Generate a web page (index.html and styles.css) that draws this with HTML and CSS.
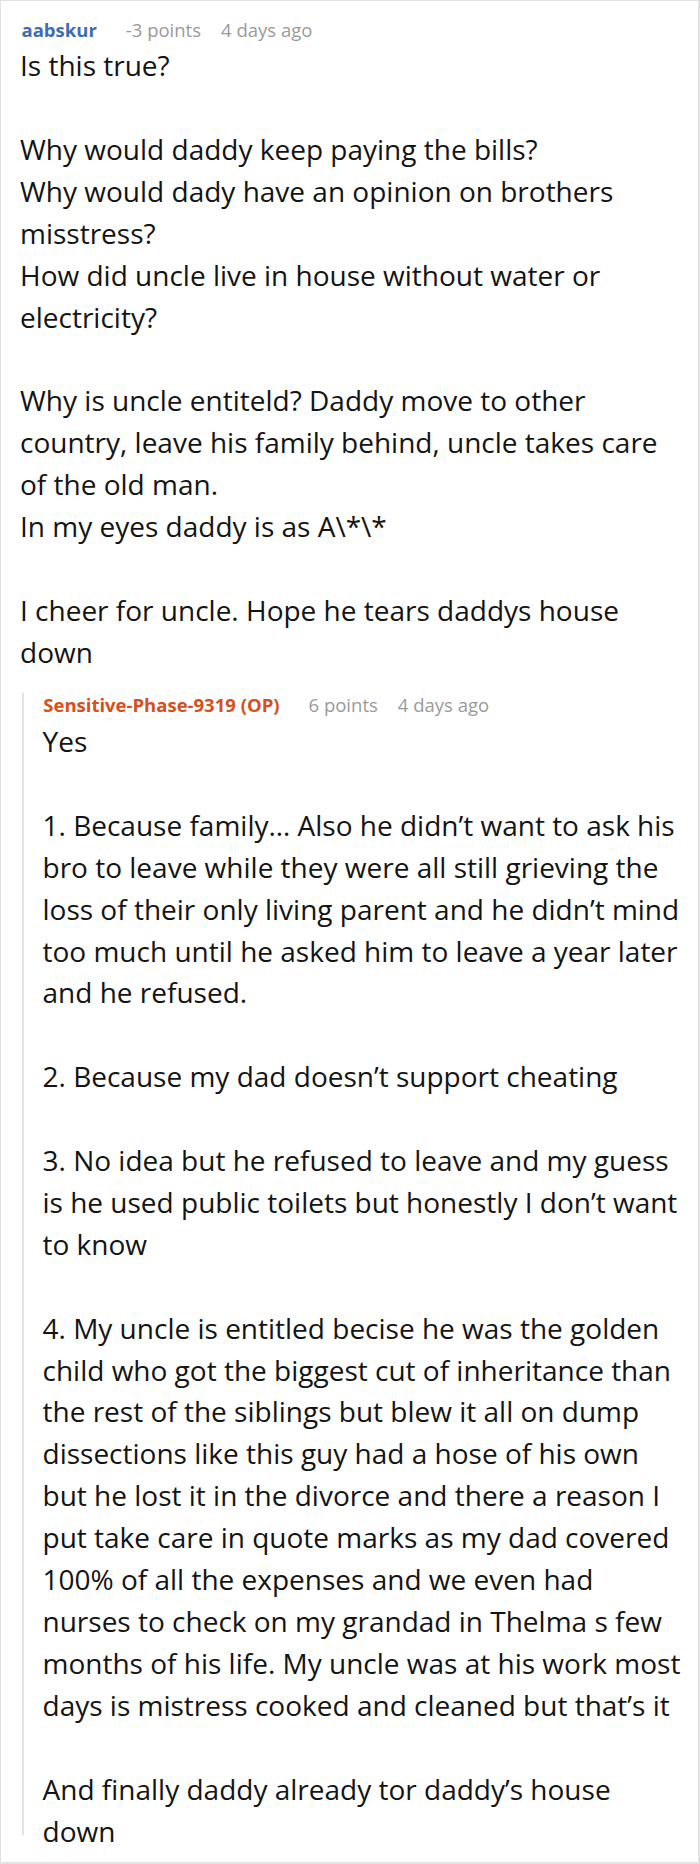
FILE: index.html
```html
<!DOCTYPE html>
<html>
<head>
<meta charset="utf-8">
<link rel="stylesheet" href="styles.css">
</head>
<body>
<div class="thread">
  <div class="comment">
    <div class="meta">
      <span class="author">aabskur</span>
      <span class="info">-3 points</span>
      <span class="info">4 days ago</span>
    </div>
    <div class="body">Is this true?<br><br>Why would daddy keep paying the bills?<br>Why would dady have an opinion on brothers<br>misstress?<br>How did uncle live in house without water or<br>electricity?<br><br>Why is uncle entiteld? Daddy move to other<br>country, leave his family behind, uncle takes care<br>of the old man.<br>In my eyes daddy is as A\*\*<br><br>I cheer for uncle. Hope he tears daddys house<br>down</div>
    <div class="reply">
      <div class="meta reply-meta">
        <span class="author op">Sensitive-Phase-9319 (OP)</span>
        <span class="info">6 points</span>
        <span class="info">4 days ago</span>
      </div>
      <div class="body">Yes<br><br>1. Because family… Also he didn’t want to ask his<br>bro to leave while they were all still grieving the<br>loss of their only living parent and he didn’t mind<br>too much until he asked him to leave a year later<br>and he refused.<br><br>2. Because my dad doesn’t support cheating<br><br>3. No idea but he refused to leave and my guess<br>is he used public toilets but honestly I don’t want<br>to know<br><br>4. My uncle is entitled becise he was the golden<br>child who got the biggest cut of inheritance than<br>the rest of the siblings but blew it all on dump<br>dissections like this guy had a hose of his own<br>but he lost it in the divorce and there a reason I<br>put take care in quote marks as my dad covered<br>100% of all the expenses and we even had<br>nurses to check on my grandad in Thelma s few<br>months of his life. My uncle was at his work most<br>days is mistress cooked and cleaned but that’s it<br><br>And finally daddy already tor daddy’s house<br>down</div>
    </div>
  </div>
</div>
</body>
</html>
```
FILE: styles.css
```css
html, body {
  margin: 0;
  padding: 0;
  background: #ffffff;
}
.thread {
  width: 700px;
  height: 1864px;
  box-sizing: border-box;
  border: 1px solid #e2e2e2;
  border-right-width: 2px;
  border-bottom-width: 2px;
  padding: 17px 8px 8px 19px;
  font-family: "Open Sans", "Noto Sans", sans-serif;
  color: #141414;
}
.meta {
  display: flex;
  align-items: center;
  height: 24px;
  line-height: 24px;
  font-size: 18.5px;
  white-space: nowrap;
  margin-left: 1.5px;
}
.author {
  font-weight: 700;
  color: #3d6cb4;
  margin-right: 29px;
}
.author.op {
  color: #d5501d;
}
.info {
  color: #9a9a9a;
  margin-right: 20px;
}
.body {
  margin-top: 3.2px;
  font-size: 28px;
  line-height: 41.9px;
  white-space: nowrap;
}
.reply {
  margin-top: 29.3px;
  margin-left: 2px;
  border-left: 2px solid #e3e3e3;
  padding-left: 18.5px;
  height: 1142px;
}
.reply-meta {
  margin-top: -10.2px;
  margin-left: 0.8px;
}
.reply .body {
  margin-top: 4.1px;
}
```
